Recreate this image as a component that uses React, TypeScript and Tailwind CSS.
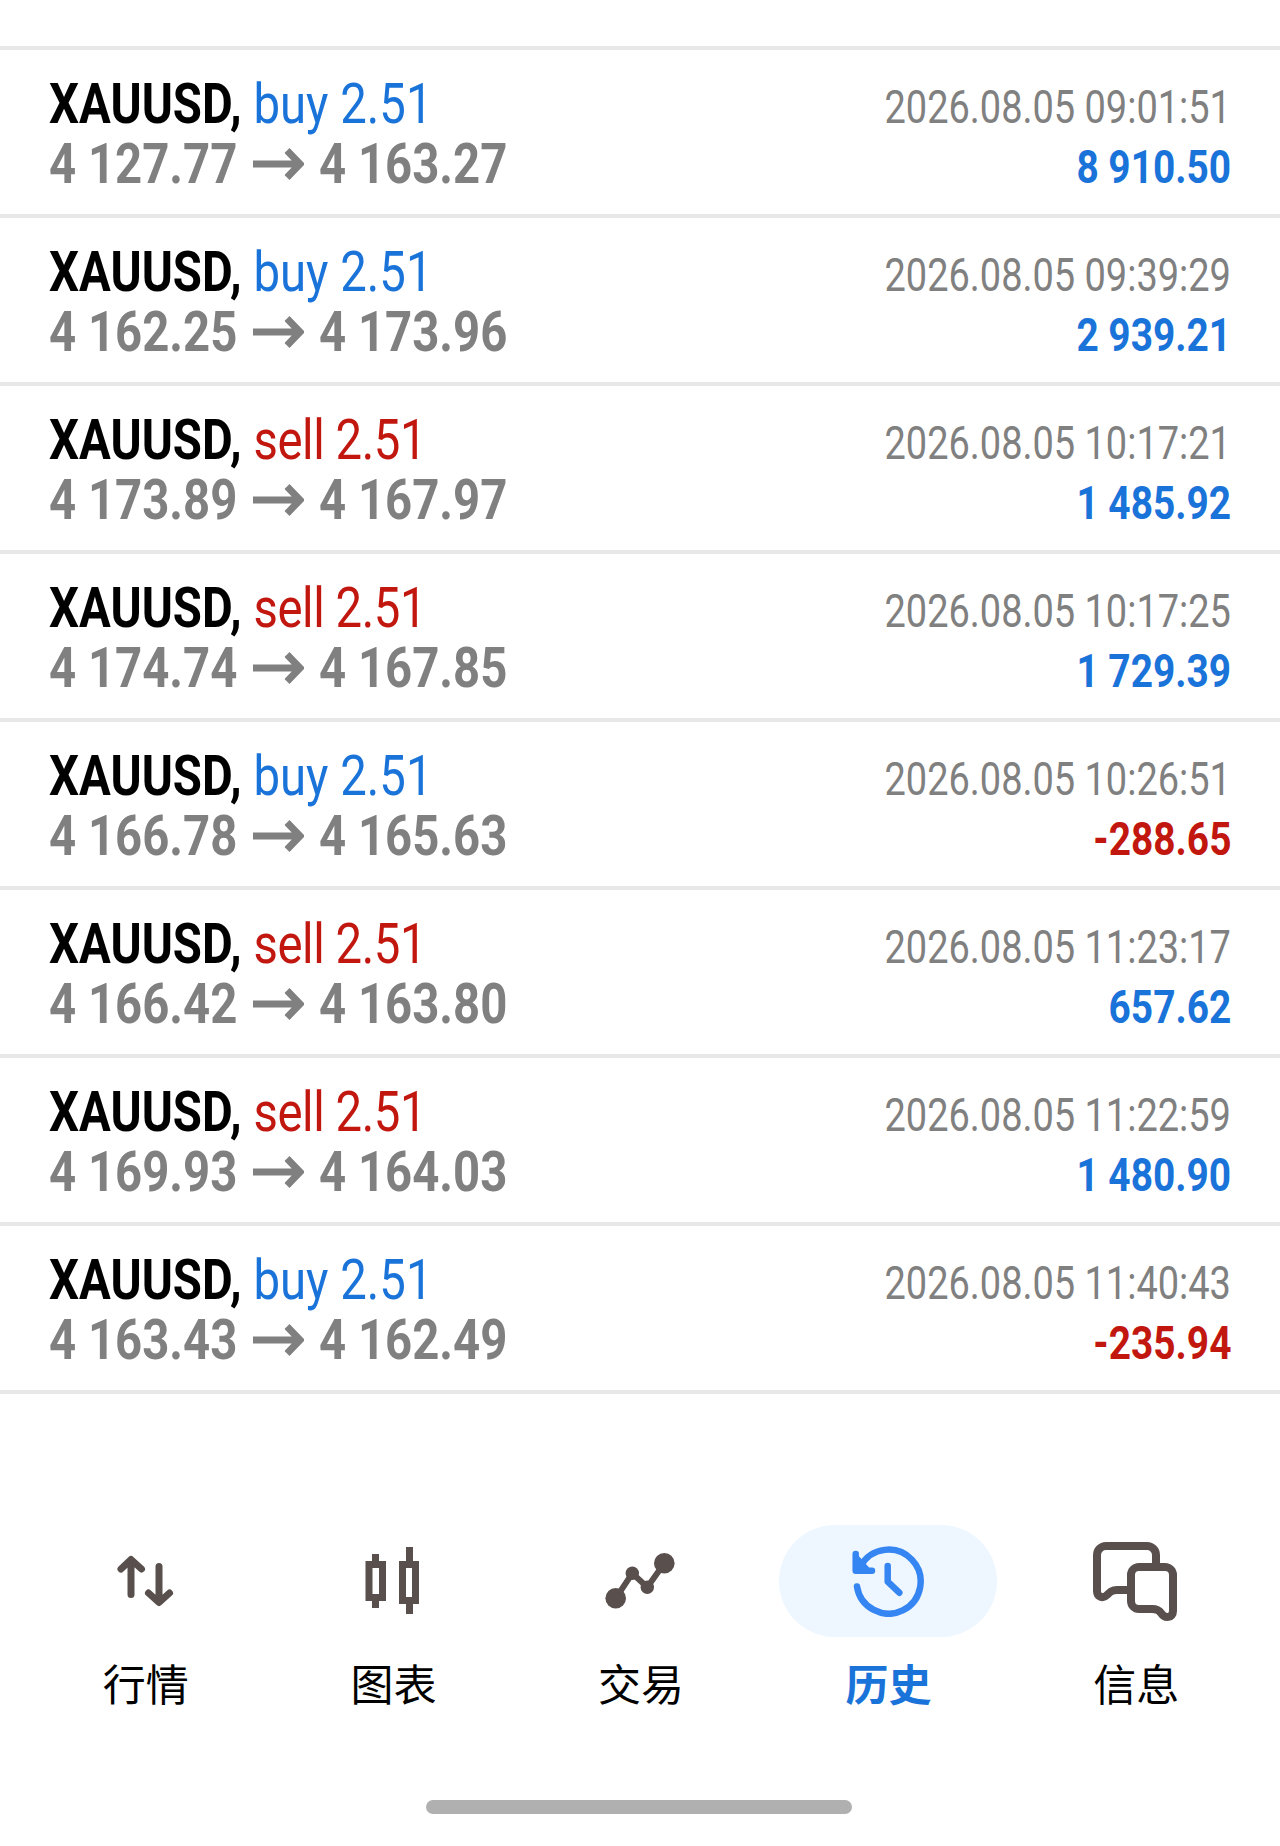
import React from "react";

type Trade = {
  side: "buy" | "sell";
  open: string;
  close: string;
  time: string;
  profit: string;
};

const trades: Trade[] = [
  { side: "buy", open: "4 127.77", close: "4 163.27", time: "2026.08.05 09:01:51", profit: "8 910.50" },
  { side: "buy", open: "4 162.25", close: "4 173.96", time: "2026.08.05 09:39:29", profit: "2 939.21" },
  { side: "sell", open: "4 173.89", close: "4 167.97", time: "2026.08.05 10:17:21", profit: "1 485.92" },
  { side: "sell", open: "4 174.74", close: "4 167.85", time: "2026.08.05 10:17:25", profit: "1 729.39" },
  { side: "buy", open: "4 166.78", close: "4 165.63", time: "2026.08.05 10:26:51", profit: "-288.65" },
  { side: "sell", open: "4 166.42", close: "4 163.80", time: "2026.08.05 11:23:17", profit: "657.62" },
  { side: "sell", open: "4 169.93", close: "4 164.03", time: "2026.08.05 11:22:59", profit: "1 480.90" },
  { side: "buy", open: "4 163.43", close: "4 162.49", time: "2026.08.05 11:40:43", profit: "-235.94" },
];

const Arrow = () => (
  <svg width="51" height="34" viewBox="0 0 51 34" className="shrink-0" aria-hidden="true">
    <path d="M0 17H46M34 3.5L47 17L34 30.5" fill="none" stroke="#808080" strokeWidth="7" />
  </svg>
);

function TradeRow({ trade }: { trade: Trade }) {
  const negative = trade.profit.startsWith("-");
  return (
    <div className="flex h-[168px] justify-between border-b-4 border-[#e8e8e8] pl-[49px] pr-[49px] pt-[24px]">
      <div className="flex flex-col">
        <div className="h-[60px] origin-left scale-x-[0.845] whitespace-nowrap text-[56px] leading-[60px]">
          <span className="font-bold text-black">XAUUSD,</span>{" "}
          <span className={trade.side === "buy" ? "text-[#1a73d9]" : "tracking-[-0.5px] text-[#c2170f]"}>
            {trade.side} 2.51
          </span>
        </div>
        <div className="flex h-[60px] items-center whitespace-nowrap text-[56px] font-bold leading-[60px] text-[#808080]">
          <span className="inline-block w-[204px] origin-left scale-x-[0.845]">{trade.open}</span>
          <Arrow />
          <span className="ml-[15px] inline-block w-[204px] origin-left scale-x-[0.845]">{trade.close}</span>
        </div>
      </div>
      <div className="flex flex-col items-end">
        <div className="mt-[3px] h-[60px] origin-right scale-x-[0.825] whitespace-nowrap text-[46px] leading-[60px] text-[#808080]">
          {trade.time}
        </div>
        <div
          className={`h-[60px] origin-right scale-x-[0.845] whitespace-nowrap text-[46px] font-bold leading-[60px] ${
            negative ? "text-[#c2170f]" : "text-[#1a73d9]"
          }`}
        >
          {trade.profit}
        </div>
      </div>
    </div>
  );
}

const MarketIcon = () => (
  <svg width="62" height="58" viewBox="0 0 62 58" fill="none" stroke="#59504d" strokeWidth="7" strokeLinecap="round" strokeLinejoin="round">
    <path d="M17 42.5V8M7 17L17 7.5L27.5 17" />
    <path d="M45 14.5V49M34.5 41L45 50.5L55.5 41" />
  </svg>
);

const ChartIcon = () => (
  <svg width="54" height="68" viewBox="0 0 54 68" fill="none" stroke="#59504d" strokeWidth="7">
    <path d="M10.5 7V17M10.5 51V61M44.5 0V17M44.5 54V67" />
    <rect x="4" y="17.5" width="13.5" height="33" />
    <rect x="37.5" y="17.5" width="13" height="36" />
  </svg>
);

const TradeIcon = () => (
  <svg width="74" height="60" viewBox="0 0 74 60" fill="none">
    <path d="M12.7 47.3L29.3 22.3L44.3 36.3L61.3 12.3" stroke="#59504d" strokeWidth="6" />
    <circle cx="12.7" cy="47.3" r="10.3" fill="#59504d" />
    <circle cx="29.3" cy="22.3" r="6.7" fill="#59504d" />
    <circle cx="44.3" cy="36.3" r="6.7" fill="#59504d" />
    <circle cx="61.3" cy="12.3" r="10.3" fill="#59504d" />
  </svg>
);

const HistoryIcon = () => (
  <svg width="72" height="72" viewBox="2 0 72 72" fill="none" stroke="#3585f2" strokeWidth="6.5" strokeLinecap="round" strokeLinejoin="round">
    <path d="M10.7 21A32 32 0 1 1 7 41.5" />
    <path d="M5.7 9V25.7H22" />
    <path d="M7 14L16 24H7Z" fill="#3585f2" />
    <path d="M37.7 21V36.7L49.3 47.7" />
  </svg>
);

const MessageIcon = () => (
  <svg width="90" height="84" viewBox="0 0 90 84" fill="none" stroke="#59504d" strokeWidth="8" strokeLinejoin="round">
    <path d="M66 25V16A9 9 0 0 0 57 7H16A9 9 0 0 0 7 16V52C7 58 13 60 17 56C20 53 22 51 27 51H37" />
    <path d="M49 28H75A8 8 0 0 1 83 36V72C83 79 75 80 71 74C69 71 66 70 62 70H49A8 8 0 0 1 41 62V36A8 8 0 0 1 49 28Z" />
  </svg>
);

type Tab = { label: string; icon: React.ReactNode; active?: boolean };

const tabs: Tab[] = [
  { label: "行情", icon: <MarketIcon /> },
  { label: "图表", icon: <ChartIcon /> },
  { label: "交易", icon: <TradeIcon /> },
  { label: "历史", icon: <HistoryIcon />, active: true },
  { label: "信息", icon: <MessageIcon /> },
];

export default function App() {
  return (
    <div className="flex h-[1846px] w-[1280px] flex-col overflow-hidden bg-white font-['Roboto','Noto_Sans_CJK_SC',sans-serif]">
      <div className="h-[46px] shrink-0 border-b-4 border-[#e8e8e8] box-content" />
      {trades.map((t) => (
        <TradeRow key={t.time} trade={t} />
      ))}
      <nav className="mt-[131px] grid grid-cols-5 px-[21px]">
        {tabs.map((tab) => (
          <div key={tab.label} className="flex flex-col items-center">
            <div
              className={`flex h-[112px] w-[218px] items-center justify-center rounded-full ${
                tab.active ? "bg-[#eef7ff]" : ""
              }`}
            >
              {tab.icon}
            </div>
            <div
              className={`ml-[2px] mt-[23px] h-[44px] text-[43px] leading-[44px] font-['Noto_Sans_CJK_SC',sans-serif] ${
                tab.active ? "font-bold text-[#1a73d9]" : "text-black"
              }`}
            >
              {tab.label}
            </div>
          </div>
        ))}
      </nav>
      <div className="mx-auto mt-[96px] h-[14px] w-[426px] -translate-x-px rounded-[7px] bg-[#b0b0b0]" />
    </div>
  );
}
